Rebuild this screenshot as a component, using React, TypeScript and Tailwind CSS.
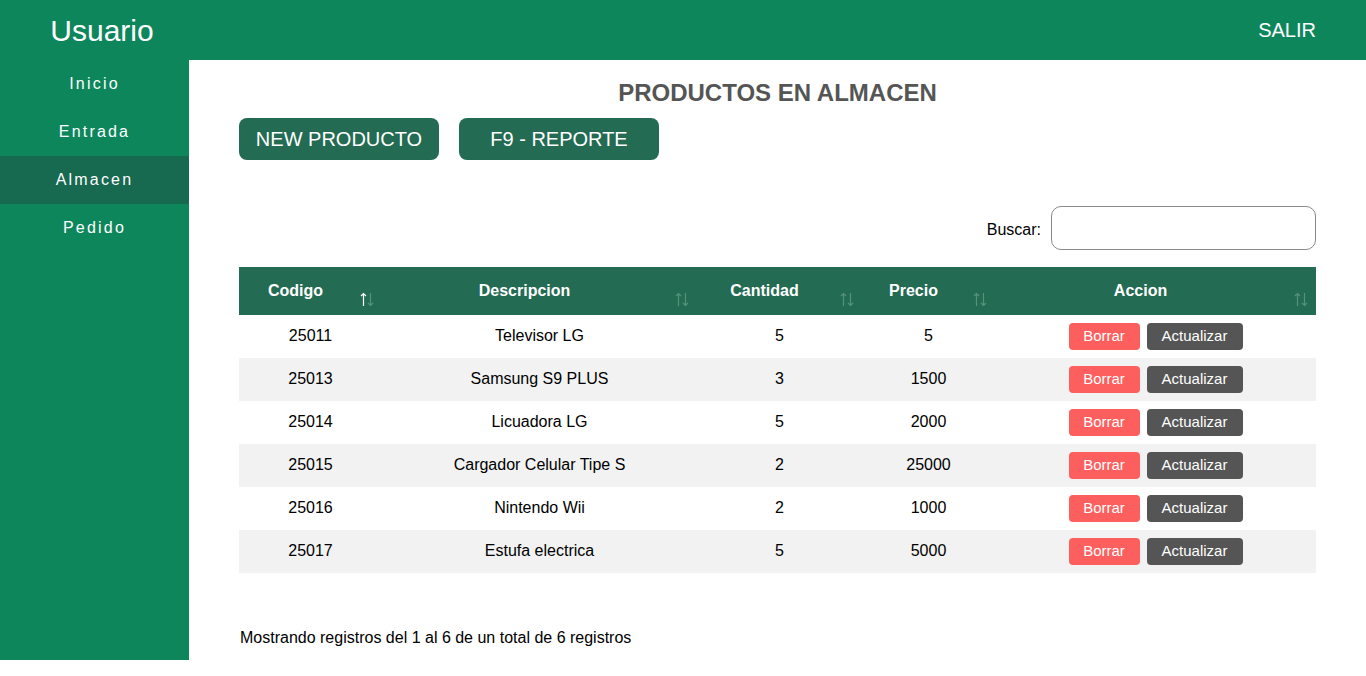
import React from "react";

const productos = [
  { codigo: "25011", descripcion: "Televisor LG", cantidad: "5", precio: "5" },
  { codigo: "25013", descripcion: "Samsung S9 PLUS", cantidad: "3", precio: "1500" },
  { codigo: "25014", descripcion: "Licuadora LG", cantidad: "5", precio: "2000" },
  { codigo: "25015", descripcion: "Cargador Celular Tipe S", cantidad: "2", precio: "25000" },
  { codigo: "25016", descripcion: "Nintendo Wii", cantidad: "2", precio: "1000" },
  { codigo: "25017", descripcion: "Estufa electrica", cantidad: "5", precio: "5000" },
];

const menu = ["Inicio", "Entrada", "Almacen", "Pedido"];

const SortIcon = ({ active = false }: { active?: boolean }) => (
  <svg
    width="16"
    height="15"
    viewBox="0 0 16 15"
    className="absolute bottom-[8px] right-[7px]"
  >
    <g fill="none" strokeWidth="1.2">
      <path
        d="M4.5 14V1.5M2 4L4.5 1.5L7 4"
        stroke={active ? "#ffffff" : "#55917b"}
      />
      <path d="M11.5 1V13.5M9 11L11.5 13.5L14 11" stroke="#55917b" />
    </g>
  </svg>
);

const headers = [
  { label: "Codigo", width: "w-[143px]", active: true },
  { label: "Descripcion", width: "w-[315px]" },
  { label: "Cantidad", width: "w-[165px]" },
  { label: "Precio", width: "w-[133px]" },
  { label: "Accion", width: "w-[321px]" },
];

export default function App() {
  return (
    <div className="min-h-[676px] bg-white font-['Liberation_Sans',Arial,sans-serif] text-black">
      <header className="flex h-[60px] items-center justify-between bg-[#0d865c] pr-[50px] text-white">
        <div className="w-[204px] text-center text-[30px]">Usuario</div>
        <div className="text-[20px]">SALIR</div>
      </header>

      <div className="flex">
        <nav className="h-[600px] w-[189px] shrink-0 bg-[#0d865c]">
          {menu.map((item) => (
            <div
              key={item}
              className={`flex h-[48px] items-center justify-center text-[16px] tracking-[2.2px] text-white ${
                item === "Almacen" ? "bg-[#17694f]" : ""
              }`}
            >
              {item}
            </div>
          ))}
        </nav>

        <main className="flex-1 px-[50px] pt-[19px]">
          <h1 className="text-center text-[24px] leading-[28px] font-bold text-[#555555]">
            PRODUCTOS EN ALMACEN
          </h1>

          <div className="mt-[11px] flex gap-[20px]">
            <button className="h-[42px] w-[200px] rounded-[8px] bg-[#236b52] text-[20px] text-white">
              NEW PRODUCTO
            </button>
            <button className="h-[42px] w-[200px] rounded-[8px] bg-[#236b52] text-[20px] text-white">
              F9 - REPORTE
            </button>
          </div>

          <div className="mt-[46px] flex items-center justify-end gap-[10px]">
            <label className="pt-[4px] text-[16px]">Buscar:</label>
            <input
              type="text"
              className="h-[44px] w-[265px] rounded-[10px] border border-[#8a8a8a] px-2 outline-none"
            />
          </div>

          <table className="mt-[17px] w-full table-fixed border-collapse text-[16px]">
            <thead>
              <tr className="h-[48px] bg-[#236b52] text-white">
                {headers.map((h) => (
                  <th
                    key={h.label}
                    className={`relative ${h.width} pr-[30px] pb-[1px] text-center font-bold`}
                  >
                    {h.label}
                    <SortIcon active={h.active} />
                  </th>
                ))}
              </tr>
            </thead>
            <tbody>
              {productos.map((p, i) => (
                <tr
                  key={p.codigo}
                  className={`h-[43px] text-center ${i % 2 === 1 ? "bg-[#f2f2f2]" : "bg-white"}`}
                >
                  <td className="pb-[2px]">{p.codigo}</td>
                  <td className="pb-[2px]">{p.descripcion}</td>
                  <td className="pb-[2px]">{p.cantidad}</td>
                  <td className="pb-[2px]">{p.precio}</td>
                  <td>
                    <div className="flex items-center justify-center gap-[7px]">
                      <button className="h-[27px] w-[71px] rounded-[4px] bg-[#fd5f5f] text-[15px] text-white">
                        Borrar
                      </button>
                      <button className="h-[27px] w-[96px] rounded-[4px] bg-[#555555] text-[15px] text-white">
                        Actualizar
                      </button>
                    </div>
                  </td>
                </tr>
              ))}
            </tbody>
          </table>

          <p className="mt-[53px] pl-[1px] text-[16px]">
            Mostrando registros del 1 al 6 de un total de 6 registros
          </p>
        </main>
      </div>
    </div>
  );
}
